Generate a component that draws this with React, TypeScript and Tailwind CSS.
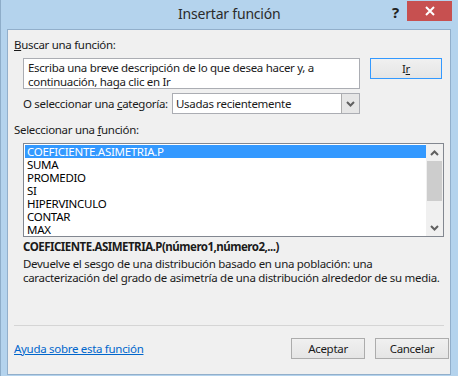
const rows = ["COEFICIENTE.ASIMETRIA.P", "SUMA", "PROMEDIO", "SI", "HIPERVINCULO", "CONTAR", "MAX"];

function Chevron({ up }: { up?: boolean }) {
  return (
    <svg width="9" height="6" viewBox="0 0 9 6">
      <polyline
        points={up ? "1,5 4.5,1.5 8,5" : "1,1 4.5,4.5 8,1"}
        fill="none"
        stroke="#606060"
        strokeWidth="2"
      />
    </svg>
  );
}

function Btn({ children }: { children: React.ReactNode }) {
  return (
    <div className="flex h-[21px] w-[74px] items-center justify-center border border-[#acacac] bg-gradient-to-b from-[#f0f0f0] to-[#e5e5e5] text-[#1a1a1a]">
      {children}
    </div>
  );
}

export default function App() {
  return (
    <div className="flex h-[376px] w-[458px] flex-col overflow-hidden border-l border-[#8eadc9] bg-[#b4d3ed] font-['Noto_Sans',sans-serif] text-[11.5px] leading-[16px] tracking-[-0.3px] whitespace-nowrap text-[#1a1a1a]">
      {/* title bar */}
      <div className="flex h-[29px] items-start">
        <div className="flex h-[28px] flex-1 items-center pl-[177px] text-[14px] tracking-[-0.2px] text-[#2b2b2b]">
          Insertar función
        </div>
        <div className="mt-[4px] w-[15px] text-[15px] font-bold leading-[16px] text-[#222]">?</div>
        <div className="mt-[1px] mr-[6px] flex h-[20px] w-[45px] items-center justify-center bg-[#c75050]">
          <svg width="10" height="10" viewBox="0 0 10 10">
            <path d="M1 1L9 9M9 1L1 9" stroke="white" strokeWidth="2" />
          </svg>
        </div>
      </div>

      {/* client area */}
      <div className="ml-[6px] flex h-[346px] w-[444px] flex-col border border-[#92afcb] bg-[#f0f0f0]">
        <div className="mt-[7px] pl-[6px]">
          <span className="underline">B</span>uscar una función:
        </div>

        <div className="mt-[5px] flex pl-[15px]">
          <div className="h-[31px] w-[337px] border border-[#abadb3] bg-white px-[4px] pt-[2px] leading-[14px]">
            Escriba una breve descripción de lo que desea hacer y, a
            <br />
            continuación, haga clic en Ir
          </div>
          <div className="ml-[10px]">
            <div className="flex h-[21px] w-[72px] items-center justify-center border border-[#3399ff] bg-gradient-to-b from-[#f0f0f0] to-[#e5e5e5]">
              I<span className="underline">r</span>
            </div>
          </div>
        </div>

        <div className="mt-[4px] flex items-center pl-[15px]">
          <div className="w-[149px]">
            O seleccionar una <span className="underline">c</span>ategoría:
          </div>
          <div className="flex h-[21px] w-[188px] border border-[#abadb3] bg-white">
            <div className="flex-1 pl-[3px] leading-[19px]">Usadas recientemente</div>
            <div className="flex w-[18px] items-center justify-center border-l border-[#acacac] bg-[#e6e6e6]">
              <Chevron />
            </div>
          </div>
        </div>

        <div className="mt-[8px] pl-[6px]">
          Seleccionar una <span className="underline">f</span>unción:
        </div>

        <div className="mt-[5px] ml-[15px] flex h-[94px] w-[421px] border border-[#828790] bg-white">
          <div className="flex-1 pl-[1px] pt-[1px]">
            {rows.map((r, i) => (
              <div
                key={r}
                className={
                  "h-[13px] pl-[2px] leading-[13px] " + (i === 0 ? "bg-[#3399ff] text-white" : "text-black")
                }
              >
                {r}
              </div>
            ))}
          </div>
          <div className="flex w-[17px] flex-col items-center bg-[#f0f0f0]">
            <div className="flex h-[17px] w-full items-center justify-center">
              <Chevron up />
            </div>
            <div className="h-[40px] w-[15px] bg-[#cdcdcd]" />
            <div className="flex-1" />
            <div className="flex h-[17px] w-full items-center justify-center">
              <Chevron />
            </div>
          </div>
        </div>

        <div className="mt-[2px] pl-[15px] font-bold tracking-[-0.5px]">COEFICIENTE.ASIMETRIA.P(número1,número2,...)</div>
        <div className="mt-[2px] pl-[15px] leading-[14px]">
          Devuelve el sesgo de una distribución basado en una población: una
          <br />
          caracterización del grado de asimetría de una distribución alrededor de su media.
        </div>

        <div className="mt-[40px] ml-[6px] h-px w-[430px] bg-[#d5d5d5]" />

        <div className="mt-[12px] flex items-center pl-[6px]">
          <div className="flex-1 text-[#0066cc] underline">Ayuda sobre esta función</div>
          <Btn>Aceptar</Btn>
          <div className="w-[10px]" />
          <Btn>Cancelar</Btn>
          <div className="w-[1px]" />
        </div>
      </div>
    </div>
  );
}
